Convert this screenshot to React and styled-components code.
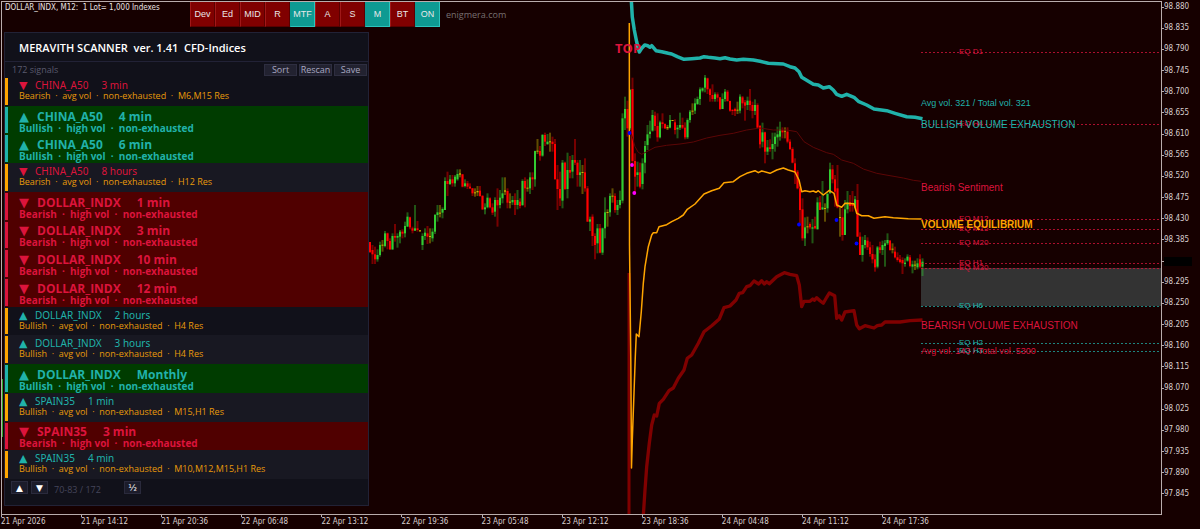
import React from "react";
import styled, { createGlobalStyle } from "styled-components";

const GlobalStyle = createGlobalStyle`
  * {
    box-sizing: border-box;
  }
  body {
    margin: 0;
    background: #160000;
    overflow: hidden;
  }
`;

const CRIMSON = "#dc143c";
const TEAL = "#20b2aa";
const ORANGE = "#ffa500";
const FRAME = "#b9adad";

const UI_FONT = `"Open Sans", "Noto Sans", sans-serif`;
const AXIS_FONT = `"DejaVu Sans Condensed", "DejaVu Sans", sans-serif`;
const LABEL_FONT = `"Liberation Sans", Arial, sans-serif`;

const Terminal = styled.main`
  display: grid;
  grid-template-columns: minmax(0, 1fr) 38px;
  grid-template-rows: minmax(0, 1fr) 14px;
  height: 100vh;
  min-height: 500px;
  padding: 1px 0 0 1px;
  background: #160000;
`;

const Plot = styled.section`
  position: relative;
  display: flex;
  align-items: flex-start;
  border: 1px solid ${FRAME};
  overflow: hidden;
`;

const Drawing = styled.svg`
  position: absolute;
  inset: 0;
  width: 100%;
  height: 100%;
`;

const LeftColumn = styled.div`
  position: relative;
  display: flex;
  flex-direction: column;
  gap: 18px;
  width: 367px;
  height: 100%;
  padding: 0 0 8px 2px;
  flex: none;
`;

const SymbolLine = styled.div`
  flex: none;
  height: 12px;
  padding-left: 1px;
  color: #e8e0e0;
  font: 8px/12px ${AXIS_FONT};
  white-space: pre;
`;

const Panel = styled.section`
  display: flex;
  flex-direction: column;
  flex: 1;
  min-height: 0;
  border: 1px solid #222236;
  background: #11111a;
  color: #fff;
  font-family: ${UI_FONT};
`;

const PanelTitle = styled.h1`
  flex: none;
  height: 29px;
  margin: 0;
  padding-left: 14px;
  border-bottom: 1px solid #222236;
  font-size: 11px;
  font-weight: 600;
  line-height: 30px;
  white-space: pre;
`;

const PanelBar = styled.div`
  display: flex;
  align-items: center;
  flex: none;
  gap: 2px;
  height: 15px;
  padding: 0 1px 0 7px;
`;

const Count = styled.span`
  flex: 1;
  color: #5a5a6e;
  font-size: 9px;
  line-height: 16px;
`;

const BarButton = styled.button`
  width: 33px;
  height: 12px;
  padding: 0;
  border: 1px solid #2e2e40;
  background: #222230;
  color: #a8a8c0;
  font: 9px/10px ${UI_FONT};
  cursor: pointer;
`;

const SignalList = styled.ul`
  display: grid;
  grid-auto-rows: minmax(0, 1fr);
  flex: 1;
  min-height: 0;
  margin: 0;
  padding: 0;
  list-style: none;
`;

const rowBackground = ({ $high, $bull }) => {
  if (!$high) return "#11111a";
  return $bull ? "#003c00" : "#500000";
};

const Signal = styled.li`
  position: relative;
  display: flex;
  flex-direction: column;
  justify-content: center;
  padding: ${(p) => (p.$high ? "3px 0 0 14px" : "0 0 2px 14px")};
  background: ${rowBackground};
  color: ${(p) => (p.$bull ? TEAL : CRIMSON)};
  white-space: pre;

  &:nth-child(even) {
    background: ${(p) => (p.$high ? rowBackground(p) : "#181822")};
  }

  &::before {
    content: "";
    position: absolute;
    top: 1px;
    bottom: 1px;
    left: 0;
    width: 3px;
    background: ${(p) => (!p.$high ? ORANGE : p.$bull ? TEAL : CRIMSON)};
  }
`;

const SignalName = styled.div`
  display: flex;
  align-items: center;
  font-family: ${(p) => (p.$high ? UI_FONT : `"Noto Sans", sans-serif`)};
  font-size: ${(p) => (p.$high ? "12px" : "10px")};
  font-weight: ${(p) => (p.$high ? 700 : 400)};
  line-height: ${(p) => (p.$high ? "12px" : "11px")};
`;

const Arrow = styled.span`
  width: ${(p) => (p.$high ? "18px" : "16px")};
  font-family: "DejaVu Sans", sans-serif;
  font-size: ${(p) => (p.$high ? "13px" : "11px")};
  font-weight: 400;
`;

const Period = styled.span`
  margin-left: ${(p) => (p.$high ? "16px" : "13px")};
`;

const SignalInfo = styled.div`
  color: ${(p) => (p.$high ? "inherit" : "#e89a0a")};
  font-size: ${(p) => (p.$high ? "10px" : "9px")};
  font-weight: ${(p) => (p.$high ? 700 : 400)};
  line-height: 10px;
`;

const Pager = styled.div`
  display: flex;
  align-items: flex-start;
  flex: none;
  gap: 3px;
  height: 26px;
  padding: 2px 0 0 6px;
`;

const PagerButton = styled.button`
  width: 17px;
  height: 13px;
  padding: 0;
  border: 1px solid #2a2a3c;
  background: #1c1c2a;
  color: #fff;
  font: 9px/10px "DejaVu Sans", sans-serif;
  cursor: pointer;
`;

const Range = styled.span`
  width: 70px;
  padding-left: 3px;
  color: #45455a;
  font-size: 9px;
  line-height: 17px;
`;

const Toolbar = styled.nav`
  position: absolute;
  top: 0;
  left: 188px;
  display: flex;
  align-items: center;
`;

const Toggle = styled.button`
  width: 25px;
  height: 25px;
  padding: 0;
  border: 1px solid ${(p) => (p.$on ? "#2cc4bc" : "#a01818")};
  border-top: 0;
  border-left-color: ${(p) => (p.$on ? "#0e9a92" : "#a01818")};
  border-right-color: ${(p) => (p.$on ? "#2cc4bc" : "#5a0000")};
  border-bottom-color: ${(p) => (p.$on ? "#2cc4bc" : "#5a0000")};
  background: ${(p) => (p.$on ? "#0e9a92" : "#800000")};
  color: #e8e8e8;
  font: 9px/24px ${LABEL_FONT};
  cursor: pointer;
`;

const SiteLink = styled.a`
  margin-left: 6px;
  color: #787070;
  font: 9px/24px ${UI_FONT};
  text-decoration: none;
`;

const ChartLabel = styled.span`
  position: absolute;
  top: ${(p) => ((p.$y - 2) / 512) * 100}%;
  left: ${(p) => ((p.$x - 2) / 1159) * 100}%;
  color: ${(p) => p.$color};
  font-family: ${(p) => (p.$ui ? UI_FONT : LABEL_FONT)};
  font-size: ${(p) => p.$size}px;
  font-weight: ${(p) => (p.$bold ? 700 : 400)};
  line-height: 12px;
  margin-top: -6px;
  white-space: nowrap;
`;

const PriceAxis = styled.ol`
  display: flex;
  flex-direction: column;
  justify-content: space-between;
  grid-row: 1 / 3;
  grid-column: 2;
  margin: 0;
  padding: 1px 0 30px;
  list-style: none;
  color: #d8cece;
  font: 8px/10px ${AXIS_FONT};
`;

const Price = styled.li`
  display: flex;
  align-items: center;
  height: 10px;

  &::before {
    content: "";
    width: 2px;
    height: 1px;
    background: ${FRAME};
  }
`;

const CurrentPrice = styled.span`
  width: 28px;
  height: 9px;
  background: #000;
`;

const TimeAxis = styled.ol`
  display: flex;
  margin: 0;
  padding: 0;
  list-style: none;
  color: #d8cece;
  font: 8px/13px ${AXIS_FONT};
`;

const Time = styled.li`
  position: relative;
  flex: 0 0 6.9%;
  white-space: nowrap;

  &::before {
    content: "";
    position: absolute;
    top: 0;
    left: 0;
    width: 1px;
    height: 2px;
    background: ${FRAME};
  }
`;

const toggles = [
  ["Dev", false],
  ["Ed", false],
  ["MID", false],
  ["R", false],
  ["MTF", true],
  ["A", false],
  ["S", false],
  ["M", true],
  ["BT", false],
  ["ON", true],
];

const signals = [
  { name: "CHINA_A50", period: "3 min", res: "M6,M15" },
  { name: "CHINA_A50", period: "4 min", bull: true, high: true },
  { name: "CHINA_A50", period: "6 min", bull: true, high: true },
  { name: "CHINA_A50", period: "8 hours", res: "H12" },
  { name: "DOLLAR_INDX", period: "1 min", high: true },
  { name: "DOLLAR_INDX", period: "3 min", high: true },
  { name: "DOLLAR_INDX", period: "10 min", high: true },
  { name: "DOLLAR_INDX", period: "12 min", high: true },
  { name: "DOLLAR_INDX", period: "2 hours", bull: true, res: "H4" },
  { name: "DOLLAR_INDX", period: "3 hours", bull: true, res: "H4" },
  { name: "DOLLAR_INDX", period: "Monthly", bull: true, high: true },
  { name: "SPAIN35", period: "1 min", bull: true, res: "M15,H1" },
  { name: "SPAIN35", period: "3 min", high: true },
  { name: "SPAIN35", period: "4 min", bull: true, res: "M10,M12,M15,H1" },
];

const times = [
  "21 Apr 2026",
  "21 Apr 14:12",
  "21 Apr 20:36",
  "22 Apr 06:48",
  "22 Apr 13:12",
  "22 Apr 19:36",
  "23 Apr 05:48",
  "23 Apr 12:12",
  "23 Apr 18:36",
  "24 Apr 04:48",
  "24 Apr 11:12",
  "24 Apr 17:36",
];

const prices = Array.from({ length: 24 }, (_, i) =>
  (98.88 - i * 0.045).toFixed(3)
);

const levels = [
  { y: 52, text: "EQ D1", color: CRIMSON },
  { y: 124, text: "EQ H4", color: CRIMSON },
  { y: 219, text: "EQ M12", color: CRIMSON },
  { y: 229, text: "EQ M15", color: CRIMSON },
  { y: 243, text: "EQ M20", color: CRIMSON },
  { y: 263, text: "EQ H1", color: CRIMSON },
  { y: 268, text: "EQ M30", color: CRIMSON },
  { y: 306, text: "EQ H6", color: TEAL },
  { y: 343, text: "EQ H2", color: TEAL },
  { y: 351, text: "EQ H3", color: TEAL },
];

// Bars are "colour high bodyTop bodyBottom low", in thirds of a unit below `top`.
const segments = [
  {
    x: 369,
    top: 120,
    bars: `r366 366 397 397,r375 390 403 432,r380 403 418 432,g388 405 418 425,g365 375 405 410,y360 374 377 395,
    g333 340 378 382,r338 340 363 388,r355 363 388 390,g340 348 388 390,r312 348 353 365,g340 348 353 383,
    g330 335 350 370,r328 335 341 355,g305 318 340 352,g277 290 320 320,r290 292 322 328,r320 325 332 340,
    g255 325 332 333,r303 325 330 335,y330 331 334 335,g340 348 375 390,g325 338 348 360,r318 340 350 372,
    y325 348 351 370,g325 335 355 365,g282 285 335 342,g255 277 285 305,y255 278 281 292,g262 267 278 295,
    g172 183 270 270,r155 183 192 228,g165 178 192 195,r165 178 190 200,g165 170 190 200,g148 162 178 182,
    y148 160 164 172,r162 163 200 202,g178 190 198 202,r183 190 200 207,r190 200 205 207,r204 205 220 228,
    y205 217 220 230,y198 213 217 228,r198 212 228 230,r225 228 268 270,g250 262 268 283,g220 233 262 265,
    r232 235 262 265,r250 262 278 285,g232 240 275 290,r205 240 256 320,g210 233 255 265,g172 220 235 250,
    y172 211 215 225,r205 213 248 265,y220 245 248 265,g228 240 247 255,r220 240 255 285,g210 240 255 268,
    r235 245 258 265,g178 183 255 258,r172 183 205 262,y178 203 206 215,g157 172 205 222,r157 172 178 210,
    g92 93 178 200,y57 92 95 102,r78 93 107 122,g42 45 107 110,r38 45 65 78,g42 65 72 75,
    y38 64 67 95,r50 65 72 95,r57 72 178 178,r135 178 207 270,r155 207 235 258,g120 128 242 265,
    r125 128 207 210,g98 150 207 235,r108 150 158 175,g105 120 155 175,r57 120 128 135,r120 128 165 200,
    g120 157 165 200,y135 156 159 222,r115 157 205 215,r198 205 305 305,g290 298 305 333,r283 290 348 378,
    r340 348 375 418,g312 325 370 400,r312 325 398 400,g323 325 398 405,g232 277 325 355,y268 276 279 320,
    g220 228 277 290,y205 227 230 248,r220 228 270 278,g240 255 270 285,g212 240 255 265`,
  },
  {
    x: 621.5,
    top: 60,
    bars: `g160 175 422 430,g110 147 175 210,r122 147 205 230,g87 90 205 210,r53 87 303 310,r280 303 350 400,
    g305 337 345 380,r308 337 380 385,g295 310 372 388,g243 258 308 340,g195 223 255 270,g182 215 222 235,
    g150 165 212 215,r155 167 198 212,r160 198 232 245,g182 187 232 235,r160 187 192 205,r190 192 205 207,
    y195 201 205 210,g165 180 203 205,y180 180 183 183,r178 187 210 223,g195 203 208 235,g158 195 203 210,
    r173 195 203 207,r187 203 232 238,g175 180 232 237,g150 155 180 188,y130 152 155 165,g115 130 152 162,
    g110 117 132 135,g82 88 117 135,g82 85 92 97,g45 53 83 97,r53 55 88 102,r85 88 105 125,
    r73 105 117 125,g97 103 117 125,r97 103 113 125,r112 112 147 150,g100 117 147 147,g87 95 117 125,
    r90 95 123 125,r122 123 152 155,r147 150 153 165,r143 147 153 168,y125 149 152 162,g103 110 152 160,
    r108 112 130 145,r120 127 137 182,g110 122 135 150,r87 122 135 152,r125 135 153 175,g118 135 153 165,
    r130 135 203 203,r195 198 253 265`,
  },
  {
    x: 761.5,
    top: 120,
    bars: `g8 37 65 82,r35 37 95 130,g60 82 95 105,r58 82 87 95,g38 72 87 118,g38 50 72 95,
    g20 43 52 80,g5 28 50 62,r22 30 37 55,y22 32 35 55,r22 35 65 70,r58 65 87 90,
    r82 87 128 130,r115 130 155 192,r150 155 205 208,r195 205 270 310,r235 268 355 362,g292 322 355 378,
    y290 319 322 340,r307 312 322 328,g297 322 326 370,r290 318 325 328,g232 247 327 330,r228 247 270 270,
    g183 262 268 270,y250 264 267 305,g218 222 265 278,g128 148 220 220,r135 148 178 190,r165 178 215 260,
    r135 205 262 265,y262 291 294 350,r265 292 345 362,g240 268 345 345,g213 247 268 280,r225 247 258 275,
    r213 250 258 275,g228 238 262 265,r192 240 350 350,r337 350 405 405,g350 375 405 425,g345 360 375 385,
    r352 362 382 390,r365 382 402 410,r375 402 418 430,r403 418 442 455,g378 382 440 445,r365 382 390 400,
    g362 375 390 405,g360 370 378 440,g340 360 370 375,r360 362 390 392,y370 386 389 400,r380 395 412 415,
    r397 412 420 425,r405 418 426 430,r412 420 430 462,g415 428 432 440,g403 410 422 425,r405 412 438 442,
    g422 433 440 460,y422 434 437 450,g415 430 442 448,r403 418 440 445,g415 425 440 468`,
  },
];

const candleColors = { r: "#ff0000", g: "#32cd32", y: "#c8b400" };

const candles = segments.flatMap(({ x, top, bars }) =>
  bars.split(",").map((bar, i) => {
    const text = bar.trim();
    const [high, open, close, low] = text
      .slice(1)
      .split(" ")
      .map((v) => top + v / 3);
    return { x: x + i * 2.5, color: candleColors[text[0]], high, open, close, low };
  })
);

const bullishLine =
  "631.3,0 632.3,17 634.3,30 636.7,42 639.3,52 641.7,48.3 644.7,45 647.7,45.7 650,47.3 651.7,45.7 656,50.7 661.7,51.7 668.3,53.3 671.7,54 677.3,56.7 684,59.3 691.7,58.7 700,58 704,56.7 708.3,57.3 715,58 720,58.7 725,57.7 730,59 736.7,60 743.3,59.3 753.3,60 760,61.3 768.3,63.3 783.3,64 790,66.7 795,68 799,71.7 801.7,77.3 808.3,81.3 813.3,84.3 818.3,85 823.3,88 829.3,86.7 833.3,90 836.7,94.3 841.7,96.3 846.7,94.3 854,97.3 858.3,101.3 866.7,105 874,109 886.7,110.7 895,113.3 906.7,116.7 915,117.3 922.5,118.7";

const sentimentLine =
  "631.3,133.3 635,146.7 638.3,152.3 641.7,154.3 646.7,151.7 655,147.3 666.7,145.3 680,144 693.3,142 706.7,138 720,135.3 733.3,133.3 746.7,130 760,128 773.3,130 786.7,130 796.7,131.7 804,141.7 813.3,147.3 826.7,152.7 833.3,154.3 841.7,160 853.3,163.3 863.3,169 876.7,173.3 890,175.7 903.3,178 913.3,180.3 921.3,181.3";

const equilibriumLine =
  "629.3,23 629.5,245 630.8,360 631.5,468 632.3,440 634,393 635.3,356.7 636.3,334 639,336.7 641.3,311.7 643.3,283.3 645,266.7 648.3,246.7 651.7,235 653.3,232.7 656.7,232.7 659,226.7 666.7,224.7 671.7,221.7 678.3,218.3 683.3,215 687.3,209.3 695,204 704,194 711.7,190.7 719.3,188.3 724,182.7 733.3,181.7 740,176.7 746.7,173.3 755,170.7 758.3,172.7 761.7,171 770,173.3 776.7,170 783.3,168 788.3,170 795,172 799,180 801.7,191.7 805,190.7 810,191.7 813.3,191 816,192.3 818.3,190.7 823.3,195 829.3,190.3 834,193.3 836.7,205 841.7,207.3 845,203.3 854,203.7 856.7,213.3 861.7,215.7 868.3,215.7 874,218.3 885,216.7 893.3,217.7 908.3,218.7 921.7,219";

const bearishLine =
  "643.3,516 645,490 646.7,466.7 649.3,443.3 651.7,425 654.3,415 656.7,416 659.3,403.3 663.3,399.3 669,390.7 673.3,388 678.3,378.3 684,370 687.3,358.3 691.7,355 698.3,343.3 704,331.7 711.7,325.7 719.3,319 724,307.7 730,306 736,300 739.3,293.3 742.7,292.7 746.7,286.7 750,285.7 754,281 758.7,284 761.7,280.7 764.3,284 766.7,281.7 769.3,283.7 776.7,276.7 784.3,272.7 790,274.3 796.7,275.7 799.3,285 801.7,306.7 804,301.3 810,301.3 812.7,299 814.3,300.3 816.7,297.7 820,300.7 823.3,303.3 826.7,297.3 829.3,293 834.7,295.7 836.7,318.3 839.3,315.7 841.7,320 845,312 854,310.7 856.7,325 859.3,328.7 865,325.7 874,328 877.3,325.7 881.7,325 885,322 900,322 910,320.7 922.5,320";

const markers = [
  [629.5, 133, "#0000ff"],
  [799, 224.5, "#0000ff"],
  [836.5, 220, "#0000ff"],
  [856.5, 243.5, "#0000ff"],
  [632, 165, "#ff00ff"],
  [634.3, 193, "#ff00ff"],
];

const PriceChart = () => (
  <Drawing viewBox="2 2 1159 512" preserveAspectRatio="none" aria-hidden="true">
    <rect x="921" y="268" width="240" height="38" fill="#333333" />
    <path d="M2.5 437V379" stroke="#32cd32" strokeWidth="1" opacity="0.8" />
    {candles.map((c) => (
      <g key={c.x} fill={c.color}>
        <rect
          x={c.x}
          y={c.high}
          width="2"
          height={Math.max(c.low - c.high, 1)}
          opacity="0.42"
        />
        <rect
          x={c.x}
          y={c.open}
          width="2"
          height={Math.max(c.close - c.open, 1)}
        />
      </g>
    ))}
    <g fill="none" strokeLinejoin="round">
      <polyline points={sentimentLine} stroke="#5c0606" strokeWidth="1" />
      <path d="M629 273V516" stroke="#800000" strokeWidth="3" />
      <polyline points={bearishLine} stroke="#800000" strokeWidth="3.3" />
      <polyline points={bullishLine} stroke={TEAL} strokeWidth="3.5" />
      <polyline points={equilibriumLine} stroke={ORANGE} strokeWidth="1.5" />
    </g>
    {levels.map((level) => (
      <line
        key={level.text}
        x1="921"
        x2="1161"
        y1={level.y + 0.5}
        y2={level.y + 0.5}
        stroke={level.color}
        strokeWidth="1"
        strokeDasharray="2 2"
        opacity="0.75"
      />
    ))}
    {markers.map(([cx, cy, fill]) => (
      <circle key={cx} cx={cx} cy={cy} r="1.9" fill={fill} />
    ))}
  </Drawing>
);

const SignalRow = ({ name, period, bull, high, res }) => {
  const info = [
    bull ? "Bullish" : "Bearish",
    high ? "high vol" : "avg vol",
    "non-exhausted",
  ];
  if (res) info.push(`${res} Res`);

  return (
    <Signal $bull={bull} $high={high}>
      <SignalName $high={high}>
        <Arrow $high={high}>{bull ? "▲" : "▼"}</Arrow>
        {name}
        <Period $high={high}>{period}</Period>
      </SignalName>
      <SignalInfo $high={high}>{info.join("  ·  ")}</SignalInfo>
    </Signal>
  );
};

const Scanner = () => (
  <Panel>
    <PanelTitle>{"MERAVITH SCANNER  ver. 1.41  CFD-Indices"}</PanelTitle>
    <PanelBar>
      <Count>172 signals</Count>
      <BarButton>Sort</BarButton>
      <BarButton>Rescan</BarButton>
      <BarButton>Save</BarButton>
    </PanelBar>
    <SignalList>
      {signals.map((signal) => (
        <SignalRow key={signal.name + signal.period} {...signal} />
      ))}
    </SignalList>
    <Pager>
      <PagerButton aria-label="Previous">▲</PagerButton>
      <PagerButton aria-label="Next">▼</PagerButton>
      <Range>70-83 / 172</Range>
      <PagerButton>½</PagerButton>
    </Pager>
  </Panel>
);

const App = () => (
  <>
    <GlobalStyle />
    <Terminal>
      <Plot>
        <PriceChart />
        {levels.map((level) => (
          <ChartLabel
            key={level.text}
            $x={959}
            $y={level.y}
            $size={8}
            $color={level.color}
          >
            {level.text}
          </ChartLabel>
        ))}
        <ChartLabel $x={615} $y={48} $size={13} $color={CRIMSON} $bold $ui>
          TOP
        </ChartLabel>
        <ChartLabel $x={921} $y={103} $size={9} $color={TEAL}>
          Avg vol. 321 / Total vol. 321
        </ChartLabel>
        <ChartLabel $x={921} $y={125} $size={10} $color={TEAL}>
          BULLISH VOLUME EXHAUSTION
        </ChartLabel>
        <ChartLabel $x={921} $y={188} $size={10} $color={CRIMSON}>
          Bearish Sentiment
        </ChartLabel>
        <ChartLabel $x={921} $y={225} $size={10} $color={ORANGE} $bold>
          VOLUME EQUILIBRIUM
        </ChartLabel>
        <ChartLabel $x={921} $y={326} $size={10} $color={CRIMSON}>
          BEARISH VOLUME EXHAUSTION
        </ChartLabel>
        <ChartLabel $x={921} $y={351} $size={9} $color={CRIMSON}>
          Avg vol. 143 / Total vol. 5300
        </ChartLabel>
        <LeftColumn>
          <SymbolLine>{"DOLLAR_INDX, M12:  1 Lot= 1,000 Indexes"}</SymbolLine>
          <Scanner />
        </LeftColumn>
        <Toolbar>
          {toggles.map(([label, on]) => (
            <Toggle key={label} $on={on} aria-pressed={on}>
              {label}
            </Toggle>
          ))}
          <SiteLink href="#">enigmera.com</SiteLink>
        </Toolbar>
      </Plot>
      <PriceAxis>
        {prices.map((price) => (
          <Price key={price}>
            {price === "98.340" ? <CurrentPrice /> : price}
          </Price>
        ))}
      </PriceAxis>
      <TimeAxis>
        {times.map((time) => (
          <Time key={time}>{time}</Time>
        ))}
      </TimeAxis>
    </Terminal>
  </>
);

export default App;
